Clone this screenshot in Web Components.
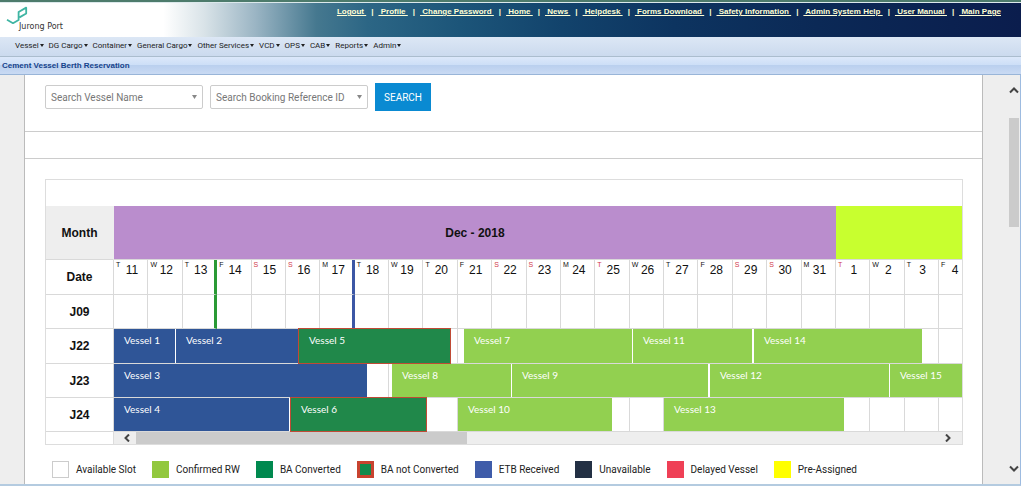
<!DOCTYPE html>
<html lang="en">
<head>
<meta charset="utf-8">
<title>Cement Vessel Berth Reservation</title>
<style>
  body { margin: 0; background: #fff; font-family: "Liberation Sans", Arial, sans-serif; }
</style>
</head>
<body>
<port-app></port-app>

<template id="t-app">
  <style>
    :host { display: block; margin-right: 3px; }
    .frame { display: flex; background: #eee; border-right: 1px solid #9dbbe0; border-bottom: 2px solid #b4cbe0; }
    main { flex: 1; margin: 0 26px 0 24px; background: #fff; border: solid #bbb; border-width: 0 1px; padding-bottom: 6px; }
    .band { height: 26px; border-bottom: 1px solid #ccc; }
    berth-schedule { margin: 20px 19px 0 20px; }
  </style>
  <port-header></port-header>
  <port-menu></port-menu>
  <page-title>Cement Vessel Berth Reservation</page-title>
  <div class="frame">
    <main>
      <vessel-search></vessel-search>
      <div class="band"></div>
      <berth-schedule></berth-schedule>
      <status-legend>
        <status-key color="#fff" edge="#ccc">Available Slot</status-key>
        <status-key color="#92c83e">Confirmed RW</status-key>
        <status-key color="#00894f">BA Converted</status-key>
        <status-key color="#128a4c" edge="#c8432f" thick>BA not Converted</status-key>
        <status-key color="#3f5ca9">ETB Received</status-key>
        <status-key color="#233044">Unavailable</status-key>
        <status-key color="#ef4056">Delayed Vessel</status-key>
        <status-key color="#ffff00">Pre-Assigned</status-key>
      </status-legend>
    </main>
    <scroll-rail></scroll-rail>
  </div>
</template>

<template id="t-header">
  <style>
    :host { display: block; border-top: 2px solid #4d7b6c; }
    header { display: flex; justify-content: space-between; align-items: flex-start; height: 34px; border-top: 1px solid #dce9ec;
      background: linear-gradient(90deg, #fff 0, #fff 16%, #d9e3e8 20%, #9bb5c4 25%, #45788f 31%, #2c6685 36%, #1c5579 45%, #12436c 55%, #0d3460 66%, #0b2956 80%, #0b1d4d 100%); }
    svg { display: block; margin-left: 5px; }
    text { font: 8px "DejaVu Sans", sans-serif; fill: #333; }
    nav { display: flex; gap: 5px; padding: 3px 20px 0 0; color: #ffffd5; font-size: 8px; font-weight: bold; line-height: 12px; white-space: pre; }
    a { color: inherit; }
  </style>
  <header>
    <svg width="64" height="28" viewBox="5 3 64 28" role="img" aria-label="Jurong Port">
      <path d="M7 19.8 L13 23.2 L18.6 20 V12 L26.2 7.6 V13.5 L19.5 17.4" fill="none" stroke="#3fb5a3" stroke-width="1.8" stroke-linejoin="round"/>
      <text x="19" y="29">Jurong Port</text>
    </svg>
    <nav aria-label="Account"></nav>
  </header>
</template>

<template id="t-menu">
  <style>
    :host { display: block; }
    nav { display: flex; gap: 5px; height: 20px; padding-left: 15px; background: linear-gradient(#dce7f5, #cbdaee); font-family: Roboto, sans-serif; font-size: 8px; line-height: 17px; border-bottom: 1px solid #abbdce; box-sizing: border-box; }
    a { display: flex; align-items: center; gap: 1px; color: #222; text-decoration: none; height: 17px; }
    svg { display: block; }
  </style>
  <nav aria-label="Main"></nav>
</template>

<template id="t-title">
  <style>
    :host { display: block; }
    h1 { margin: 0; height: 17px; padding-left: 2px; font-size: 8px; line-height: 17px; color: #15428b; background: linear-gradient(#dce8fa 0, #cddff7 45%, #b9cfee 46%, #c9daf3 100%); border-bottom: 1px solid #99b5d8; }
  </style>
  <h1><slot></slot></h1>
</template>

<template id="t-search">
  <style>
    :host { display: block; border-bottom: 1px solid #ccc; }
    form { display: flex; align-items: center; gap: 7px; height: 44px; padding: 0 20px 12px; }
    .pick { display: grid; align-items: center; width: 158px; }
    .pick > * { grid-area: 1 / 1; }
    svg { justify-self: end; margin-right: 6px; pointer-events: none; }
    select { appearance: none; width: 100%; height: 24px; margin: 0; padding: 0 16px 0 5px; border: 1px solid #ccc; border-radius: 2px; background: #fff; color: #777; font: 10px Roboto, sans-serif; }
    button { height: 28px; width: 56px; padding: 0; border: 0; background: #0a8ad2; color: #fff; font: 10px Roboto, sans-serif; }
  </style>
  <form onsubmit="return false">
    <div class="pick">
      <select aria-label="Search Vessel Name"><option>Search Vessel Name</option></select>
      <svg width="5" height="4"><path d="M0 0H5L2.5 4Z" fill="#888"/></svg>
    </div>
    <div class="pick">
      <select aria-label="Search Booking Reference ID"><option>Search Booking Reference ID</option></select>
      <svg width="5" height="4"><path d="M0 0H5L2.5 4Z" fill="#888"/></svg>
    </div>
    <button type="submit">SEARCH</button>
  </form>
</template>

<template id="t-schedule">
  <style>
    :host { display: block; border: 1px solid #ddd; }
    table { width: 100%; border-spacing: 0; table-layout: fixed; margin-top: 26px; }
    .label { width: 68px; }
    .part { width: 23px; }
    th, td { box-sizing: border-box; padding: 0; border: solid #d9d9d9; border-width: 0 1px 1px 0; font-size: 12px; color: #111; }
    tr > :last-child { border-right: 0; }
    .month > * { height: 54px; }
    .month .name { background: #eee; border-right-color: #eee; }
    .dec { background: #ba8dcd; border-right: 0; }
    .jan { background: #c8ff2f; }
    .date > * { height: 35px; }
    .green { border-right: 3px solid #2a9a35; }
    .blue { border-right: 3px solid #3c57a5; }
    .day { display: flex; height: 34px; font-weight: normal; }
    .day small { width: 8px; padding-left: 2px; font-size: 7px; line-height: 10px; }
    .day span { width: 16px; text-align: center; line-height: 21px; }
    .holiday small { color: #d0384a; }
    .berth > * { height: 34px; }
    .berth.tall > * { height: 35px; }
    .tall berth-lane { height: 34px; }
    .foot { display: flex; height: 12px; }
    .foot .blank { width: 67px; border-right: 1px solid #ddd; }
    .rail { flex: 1; display: flex; background: #eee; align-items: center; }
    .rail .thumb { width: 39%; height: 12px; background: #cbcbcb; }
    .rail .end { margin-left: auto; margin-right: 10px; }
    .rail .start { margin: 0 4px 0 9px; }
    svg { display: block; fill: none; stroke: #444; stroke-width: 2; }
  </style>
  <table>
    <colgroup><col class="label"><col span="24"><col class="part"></colgroup>
    <tbody></tbody>
  </table>
  <div class="foot">
    <div class="blank"></div>
    <div class="rail">
      <svg class="start" width="9" height="8"><path d="M6 0.5L2.5 4L6 7.5"/></svg>
      <div class="thumb"></div>
      <svg class="end" width="9" height="8"><path d="M3 0.5L6.5 4L3 7.5"/></svg>
    </div>
  </div>
</template>

<template id="t-lane">
  <style>
    :host { display: grid; height: 33px; }
    .days, .bars { grid-area: 1 / 1; display: grid; min-width: 0; }
    .days { grid-template-columns: repeat(24, 1fr) 23px; }
    .days i { border-right: 1px solid #d9d9d9; }
    .days i:last-child { border: 0; }
  </style>
  <div class="days"></div>
  <div class="bars"></div>
</template>

<template id="t-bar">
  <style>
    :host { display: block; box-sizing: border-box; min-width: 0; padding-left: 10px; font: 10px/22px Lato, sans-serif; color: #fff; white-space: nowrap; background: #92d050; }
    :host([kind="etb"]) { background: #2f5597; }
    :host([kind="ba"]) { background: #20884a; border: 1px solid #c04a35; margin: -1px 0; }
  </style>
  <slot></slot>
</template>

<template id="t-legend">
  <style>
    :host { display: flex; gap: 16px; margin: 16px 0 0 27px; }
  </style>
  <slot></slot>
</template>

<template id="t-key">
  <style>
    :host { display: flex; align-items: center; gap: 7px; font: 10px/17px Roboto, sans-serif; color: #222; white-space: nowrap; }
    span { box-sizing: border-box; width: 17px; height: 17px; }
  </style>
  <span></span><slot></slot>
</template>

<template id="t-rail">
  <style>
    :host { display: flex; flex-direction: column; align-items: center; width: 10px; padding: 12px 1px 12px 0; }
    .thumb { width: 100%; height: 109px; margin: 24px 0 auto; background: #cbcbcb; }
    svg { display: block; fill: none; stroke: #444; stroke-width: 2; }
  </style>
  <svg width="10" height="7"><path d="M1 5.5L5 1.5L9 5.5"/></svg>
  <div class="thumb"></div>
  <svg width="10" height="7"><path d="M1 1.5L5 5.5L9 1.5"/></svg>
</template>

<script>
class Base extends HTMLElement {
  constructor() {
    super();
    this.attachShadow({ mode: "open" }).append(document.getElementById(this.constructor.tpl).content.cloneNode(true));
  }
  $(sel) { return this.shadowRoot.querySelector(sel); }
}

class PortApp extends Base { static tpl = "t-app"; }
class PageTitle extends Base { static tpl = "t-title"; }
class VesselSearch extends Base { static tpl = "t-search"; }
class StatusLegend extends Base { static tpl = "t-legend"; }
class ScrollRail extends Base { static tpl = "t-rail"; }
class VesselBar extends Base { static tpl = "t-bar"; }

class PortHeader extends Base {
  static tpl = "t-header";
  connectedCallback() {
    this.$("nav").innerHTML = ["Logout ", " Profile ", " Change Password ", " Home ", " News ", " Helpdesk ", " Forms Download ",
      " Safety Information ", " Admin System Help ", " User Manual ", " Main Page"]
      .map(t => `<a href="#">${t}</a>`).join("<span>|</span>");
  }
}

class PortMenu extends Base {
  static tpl = "t-menu";
  connectedCallback() {
    this.$("nav").innerHTML = ["Vessel", "DG Cargo", "Container", "General Cargo", "Other Services", "VCD", "OPS", "CAB", "Reports", "Admin"]
      .map(t => `<a href="#">${t}<svg width="4" height="3"><path d="M0 0H4L2 3Z" fill="#222"/></svg></a>`).join("");
  }
}

class StatusKey extends Base {
  static tpl = "t-key";
  connectedCallback() {
    const s = this.$("span").style;
    s.background = this.getAttribute("color");
    if (this.hasAttribute("edge")) s.border = `${this.hasAttribute("thick") ? 3 : 1}px solid ${this.getAttribute("edge")}`;
  }
}

/* One berth's row: bars are [start, end, label, kind] on a scale of 848 units. */
class BerthLane extends Base {
  static tpl = "t-lane";
  set bars(list) {
    this.$(".days").innerHTML = "<i></i>".repeat(25);
    const cols = [], out = [];
    let at = 0;
    for (const [start, end, label, kind] of list) {
      if (start > at) cols.push(`minmax(0, ${start - at}fr)`);
      cols.push(`minmax(0, ${end - start}fr)`);
      out.push(`<vessel-bar kind="${kind}" style="grid-column:${cols.length}">${label}</vessel-bar>`);
      at = end;
    }
    if (at < 848) cols.push(`minmax(0, ${848 - at}fr)`);
    const box = this.$(".bars");
    box.style.gridTemplateColumns = cols.join(" ");
    box.innerHTML = out.join("");
  }
}

class BerthSchedule extends Base {
  static tpl = "t-schedule";
  connectedCallback() {
    const week = "TWTFSSM", holidays = [25, 1];
    const marks = { 13: "green", 17: "blue" };
    const days = Array.from({ length: 25 }, (_, i) => {
      const n = i < 21 ? 11 + i : i - 20, w = week[i % 7];
      return { n, w, off: w === "S" || holidays.includes(n), mark: marks[n] || "" };
    });
    const lanes = {
      J22: [[0, 61, "Vessel 1", "etb"], [62, 184, "Vessel 2", "etb"], [184, 337, "Vessel 5", "ba"], [350, 518, "Vessel 7", "rw"], [519, 638, "Vessel 11", "rw"], [640, 808, "Vessel 14", "rw"]],
      J23: [[0, 253, "Vessel 3", "etb"], [278, 397, "Vessel 8", "rw"], [398, 594, "Vessel 9", "rw"], [596, 775, "Vessel 12", "rw"], [776, 848, "Vessel 15", "rw"]],
      J24: [[0, 175, "Vessel 4", "etb"], [176, 313, "Vessel 6", "ba"], [344, 498, "Vessel 10", "rw"], [550, 730, "Vessel 13", "rw"]]
    };
    const body = this.$("tbody");
    body.innerHTML =
      `<tr class="month"><th class="name" scope="row">Month</th><th class="dec" colspan="21">Dec - 2018</th><th class="jan" colspan="4"></th></tr>` +
      `<tr class="date"><th scope="row">Date</th>${days.map(d => `<td class="${d.mark}${d.off ? " holiday" : ""}"><div class="day"><small>${d.w}</small><span>${d.n}</span></div></td>`).join("")}</tr>` +
      `<tr class="berth"><th scope="row">J09</th>${days.map(d => `<td class="${d.mark}"></td>`).join("")}</tr>` +
      Object.keys(lanes).map((k, i) => `<tr class="berth${i === 0 ? " tall" : ""}"><th scope="row">${k}</th><td colspan="25"><berth-lane data-berth="${k}"></berth-lane></td></tr>`).join("");
    customElements.upgrade(body);
    body.querySelectorAll("berth-lane").forEach(l => { l.bars = lanes[l.dataset.berth]; });
  }
}

customElements.define("vessel-bar", VesselBar);
customElements.define("berth-lane", BerthLane);
customElements.define("berth-schedule", BerthSchedule);
customElements.define("status-key", StatusKey);
customElements.define("status-legend", StatusLegend);
customElements.define("scroll-rail", ScrollRail);
customElements.define("vessel-search", VesselSearch);
customElements.define("page-title", PageTitle);
customElements.define("port-menu", PortMenu);
customElements.define("port-header", PortHeader);
customElements.define("port-app", PortApp);
</script>
</body>
</html>
